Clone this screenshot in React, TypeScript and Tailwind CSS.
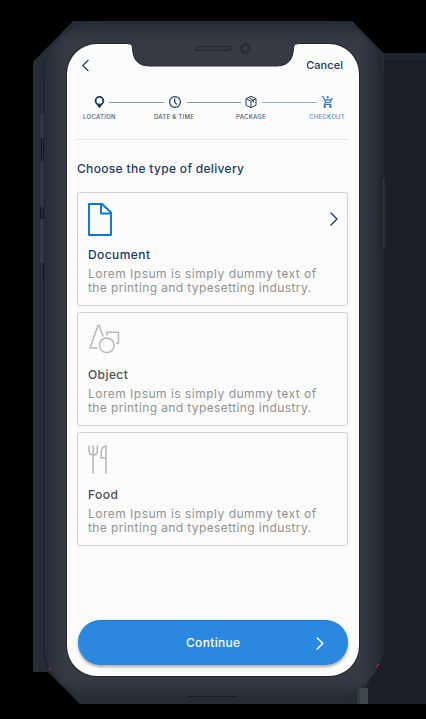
import React from "react";

const lorem = [
  { text: "Lorem Ipsum is simply dummy text of", spacing: "tracking-[0.49px]" },
  { text: "the printing and typesetting industry.", spacing: "tracking-[0.39px]" },
];

function Chevron({ className, left = false, width = 1.3 }: { className: string; left?: boolean; width?: number }) {
  return (
    <svg viewBox="0 0 8 14" className={className} fill="none" stroke="currentColor" strokeWidth={width} strokeLinecap="round" strokeLinejoin="round">
      <path d={left ? "M7 1 1 7l6 6" : "m1 1 6 6-6 6"} />
    </svg>
  );
}

function DocumentIcon() {
  return (
    <svg width="24" height="34" viewBox="0 0 24 34" fill="none" stroke="#0b75d3" strokeWidth="1.9" strokeLinejoin="round">
      <path d="M1 1h13l9 8.5V32H1z" />
      <path d="M13 1v9.5h10" />
    </svg>
  );
}

function ShapesIcon() {
  return (
    <svg width="32" height="34" viewBox="0 0 32 34" fill="none" stroke="#b7b7b7" strokeWidth="1.5" strokeLinecap="round" strokeLinejoin="round">
      <path d="M9 25H2L9.8 3.1q.8-1.7 1.6 0L15 13" />
      <circle cx="18.8" cy="22.3" r="7.3" />
      <path d="M19 12V9.3h11.5v11h-2" />
    </svg>
  );
}

function CutleryIcon() {
  return (
    <svg width="22" height="34" viewBox="0 0 22 34" fill="none" stroke="#b9b9b9" strokeWidth="1.6" strokeLinecap="round" strokeLinejoin="round">
      <path d="M1 3v4.5Q1 12 5.2 12t4.2-4.5V3M5.2 3v27" />
      <path d="M18 30V3q-4.8.5-4.8 7v5H18" />
    </svg>
  );
}

function PinIcon() {
  return (
    <svg width="11" height="14" viewBox="0 0 11 14" className="text-[#123865]">
      <path fill="currentColor" fillRule="evenodd" d="M5.5 1A4.8 4.8 0 0 0 .7 5.8C.7 8.8 4 10.5 5.5 13.5 7 10.5 10.3 8.8 10.3 5.8A4.8 4.8 0 0 0 5.5 1Zm0 1.7a3 3 0 1 1 0 6 3 3 0 0 1 0-6Z" />
    </svg>
  );
}

function ClockIcon() {
  return (
    <svg width="14" height="14" viewBox="0 0 14 14" fill="none" stroke="#17395f" strokeWidth="1.2" strokeLinecap="round">
      <circle cx="7" cy="7" r="5.4" />
      <path d="M6.7 3.8v3.6l1.9 1.7" />
    </svg>
  );
}

function BoxIcon() {
  return (
    <svg width="14" height="14" viewBox="0 0 14 14" fill="none" stroke="#29405f" strokeWidth="1" strokeLinejoin="round">
      <path d="m7 1.2 5 2.4v6.6l-5 2.5-5-2.5V3.6zM2 3.6l5 2.7 5-2.7M7 6.3v6.4M4.4 2.5l5 2.6v2.3" />
    </svg>
  );
}

function CartIcon() {
  return (
    <svg width="14" height="14" viewBox="0 0 14 14" fill="none" stroke="#2f75c8" strokeWidth="1.1">
      <path d="M1.5 1.8h1.7l2.4 5.4h4.7l2-4.2M5.6 7.2 4.4 9.4h7M5 4.7l5.8.2M7.7 1v2.4M6.5 2.2h2.4" />
      <circle cx="4.8" cy="11.6" r=".8" fill="#2f75c8" />
      <circle cx="10.5" cy="11.6" r=".8" fill="#2f75c8" />
    </svg>
  );
}

function Card({ icon, title, active = false }: { icon: React.ReactNode; title: string; active?: boolean }) {
  return (
    <article className="flex h-[114px] w-[271px] flex-col rounded-[3px] border border-[#d0d0d0] pl-2.5 pr-[9px]">
      <div className="flex h-[54px] items-start justify-between pt-2.5">
        {icon}
        {active && <Chevron className="mt-[9px] h-[14px] w-2 text-[#173763]" />}
      </div>
      <h2 className={`h-5 text-[12px] font-[450] leading-[15px] tracking-[0.42px] ${active ? "text-[#1c3a63]" : "text-[#4d4d4d]"}`}>{title}</h2>
      <p className="whitespace-nowrap text-[12px] leading-[14.4px] text-[#929292]">
        {lorem.map((line) => <span key={line.text} className={`block ${line.spacing}`}>{line.text}</span>)}
      </p>
    </article>
  );
}

function Backdrop() {
  return (
    <svg width="426" height="719" className="absolute inset-0">
      <defs>
        <linearGradient id="side" x1="0" x2="1">
          <stop stopColor="#242b37" />
          <stop offset=".035" stopColor="#2d333f" />
          <stop offset=".065" stopColor="#353a45" />
          <stop offset=".93" stopColor="#353a45" />
          <stop offset=".965" stopColor="#2b313d" />
          <stop offset="1" stopColor="#202631" />
        </linearGradient>
        <linearGradient id="ends" x1="0" y1="0" x2="0" y2="1">
          <stop stopColor="#202a36" />
          <stop offset=".035" stopColor="#303641" stopOpacity="0" />
          <stop offset=".965" stopColor="#303641" stopOpacity="0" />
          <stop offset="1" stopColor="#242c38" />
        </linearGradient>
      </defs>
      <path d="M340 53h86v651h-86z" fill="#191e28" />
      <path d="M382 53h44v7h-44z" fill="#1d252e" />
      <path d="M340 21v32h43l-31-32z" fill="#242c36" />
      <path d="M33 62 73 21h279l32 33v618l-25 32H80l-32-32H33z" fill="#242c36" />
      <path d="M384 53v600l-27 51h27z" fill="#191e28" />
      <rect x="44" y="22" width="340" height="676" rx="56" fill="url(#side)" />
      <rect x="44" y="22" width="340" height="676" rx="56" fill="url(#ends)" />
      <path d="M357 688h3v16h-3z" fill="#303c42" />
      <path d="M360 688h8v16h-8z" fill="#3d4a4e" />
      <path d="M43.5 60v588q0 11 5 20" fill="none" stroke="#18202b" />
      <path d="M39.5 114v24M39.5 162v46M39.5 219v44" stroke="#202735" />
      <path d="M42 114v24M42 162v46M42 219v44" stroke="#343a47" strokeWidth="3" />
      <path d="M41.5 138v22M43.5 144v6M40.5 206v13M43.5 207v12M43.5 266v12" stroke="#101622" />
      <path d="M383.5 178v70" stroke="#303640" strokeWidth="4" />
      <path d="M382 176v74M385 178v70" stroke="#151c26" />
      <path d="M188 696.5h50" stroke="#1b1923" />
      <path d="M50 667v3M376 667l3-3" stroke="#dc2834" />
    </svg>
  );
}

export default function App() {
  return (
    <main className="relative flex h-[719px] w-[426px] overflow-hidden bg-black pl-[67px] pt-11 font-[Inter,sans-serif]">
      <Backdrop />
      <div className="relative flex h-[632px] w-[292px] flex-col rounded-[30px] bg-[#fcfcfc] pl-2.5 shadow-[0_0_0_1px_#202630]">
        <svg width="170" height="24" viewBox="0 0 170 24" className="absolute left-[61px] top-[-1px]">
          <path d="M0 0h170q-4 0-4.5 5C165 17 160 23 148 23H22C10 23 5 17 4.5 5Q4 0 0 0Z" fill="#363a46" stroke="#232934" />
          <path d="M0 0h170" stroke="#363a46" strokeWidth="3" />
          <rect x="67" y="3.5" width="36" height="4" rx="2" fill="#303540" stroke="#202532" />
          <circle cx="117.5" cy="5.5" r="5" fill="#303540" stroke="#20242e" />
          <circle cx="117.5" cy="5.5" r="3" fill="#373b46" stroke="#20242e" />
        </svg>
        <header className="flex h-[45px] items-start justify-between pl-[5px] pr-4 pt-[14px] text-[#173963]">
          <Chevron left className="mt-px h-[13px] w-[7px]" />
          <button className="text-[11px] font-[450] leading-[14px] tracking-[0.05px]">Cancel</button>
        </header>
        <section className="h-[51px] w-[271px] border-b border-[#e2e2e2] pt-1.5">
          <div className="flex h-[14px] items-center pl-[17px]">
            <PinIcon />
            <i className="ml-1 mr-1 h-px w-[55px] bg-[#8d9bb0]" />
            <ClockIcon />
            <i className="ml-[5px] mr-[3px] h-px w-[54px] bg-[#8d9bb0]" />
            <BoxIcon />
            <i className="ml-1 mr-[3px] h-px w-[55px] bg-[#89afe0]" />
            <CartIcon />
          </div>
          <div className="mt-[3px] flex whitespace-nowrap pl-[5px] text-center text-[6px] font-medium leading-[9px] tracking-[0.28px] text-[#465b79]">
            <span className="mr-[35px] flex w-[35px] justify-center">LOCATION</span>
            <span className="mr-[39px] flex w-[44px] justify-center">DATE &amp; TIME</span>
            <span className="mr-[41px] flex w-[32px] justify-center">PACKAGE</span>
            <span className="flex w-[38px] justify-center text-[#528fd6]">CHECKOUT</span>
          </div>
        </section>
        <h1 className="mt-[21px] h-[31px] whitespace-nowrap text-[12px] font-[450] leading-4 tracking-[0.32px] text-[#1c3a63]">Choose the type of delivery</h1>
        <div className="flex flex-col gap-1.5">
          <Card active title="Document" icon={<DocumentIcon />} />
          <Card title="Object" icon={<ShapesIcon />} />
          <Card title="Food" icon={<CutleryIcon />} />
        </div>
        <button className="mt-[74px] ml-px flex h-[45px] w-[270px] items-center justify-between self-start rounded-full border-t border-[#1878cc] bg-[#2b88df] pl-[108px] pr-6 text-white shadow-[0_2px_3px_#0005]">
          <span className="text-[12px] font-medium tracking-[0.32px]">Continue</span>
          <Chevron width={1.6} className="h-[13px] w-2" />
        </button>
      </div>
    </main>
  );
}
